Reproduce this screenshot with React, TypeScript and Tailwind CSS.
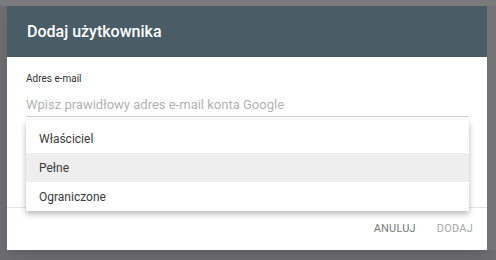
import React from 'react'

const roles = ['Właściciel', 'Pełne', 'Ograniczone']

export default function App() {
  return (
    <div className="w-[496px] h-[260px] bg-[#6d6d70] overflow-hidden flex flex-col" style={{ fontFamily: 'Roboto, "Noto Sans", sans-serif' }}>
      <div className="h-[6px] bg-[#7b7b7d] shrink-0" />
      <div className="flex flex-1">
        <div className="w-[7px] shrink-0" />
        {/* Dialog */}
        <div className="w-[480px] h-[244px] bg-white flex flex-col shadow-lg">
          <div className="h-[51px] bg-[#4a5c66] flex items-center px-[20px] shrink-0">
            <h1 className="text-[16px] font-medium text-white">Dodaj użytkownika</h1>
          </div>

          <div className="relative h-[151px] px-[19px] pt-[16px] border-b border-[#e3e3e3] shrink-0">
            <label className="block text-[10px] text-[#333] leading-[12px]">Adres e-mail</label>
            <div className="mt-[11px] h-[21px] border-b border-[#d0d0d0] flex items-start">
              <span className="text-[13px] text-[#b3b3b3] leading-[18px]">Wpisz prawidłowy adres e-mail konta Google</span>
            </div>

            {/* Dropdown menu */}
            <div className="absolute left-[19px] right-[18px] top-[63px] bg-white pt-[4px] shadow-[0_3px_6px_rgba(0,0,0,0.28)]">
              {roles.map((r, i) => (
                <div
                  key={r}
                  className={
                    'h-[29px] flex items-center pl-[13px] text-[12px] text-[#3a3a3a] ' +
                    (i === 1 ? 'bg-[#eeeeee]' : '')
                  }
                >
                  {r}
                </div>
              ))}
            </div>
          </div>

          <div className="flex-1 flex items-center justify-end pr-[14px] gap-[21px] pt-[1px]">
            <button className="text-[11px] text-[#7a7a7a] uppercase tracking-[0.2px]">Anuluj</button>
            <button className="text-[11px] text-[#a8a8a8] uppercase tracking-[0.2px]">Dodaj</button>
          </div>
        </div>
        <div className="flex-1 bg-[#747476]" />
      </div>
      <div className="h-[10px] shrink-0" />
    </div>
  )
}
